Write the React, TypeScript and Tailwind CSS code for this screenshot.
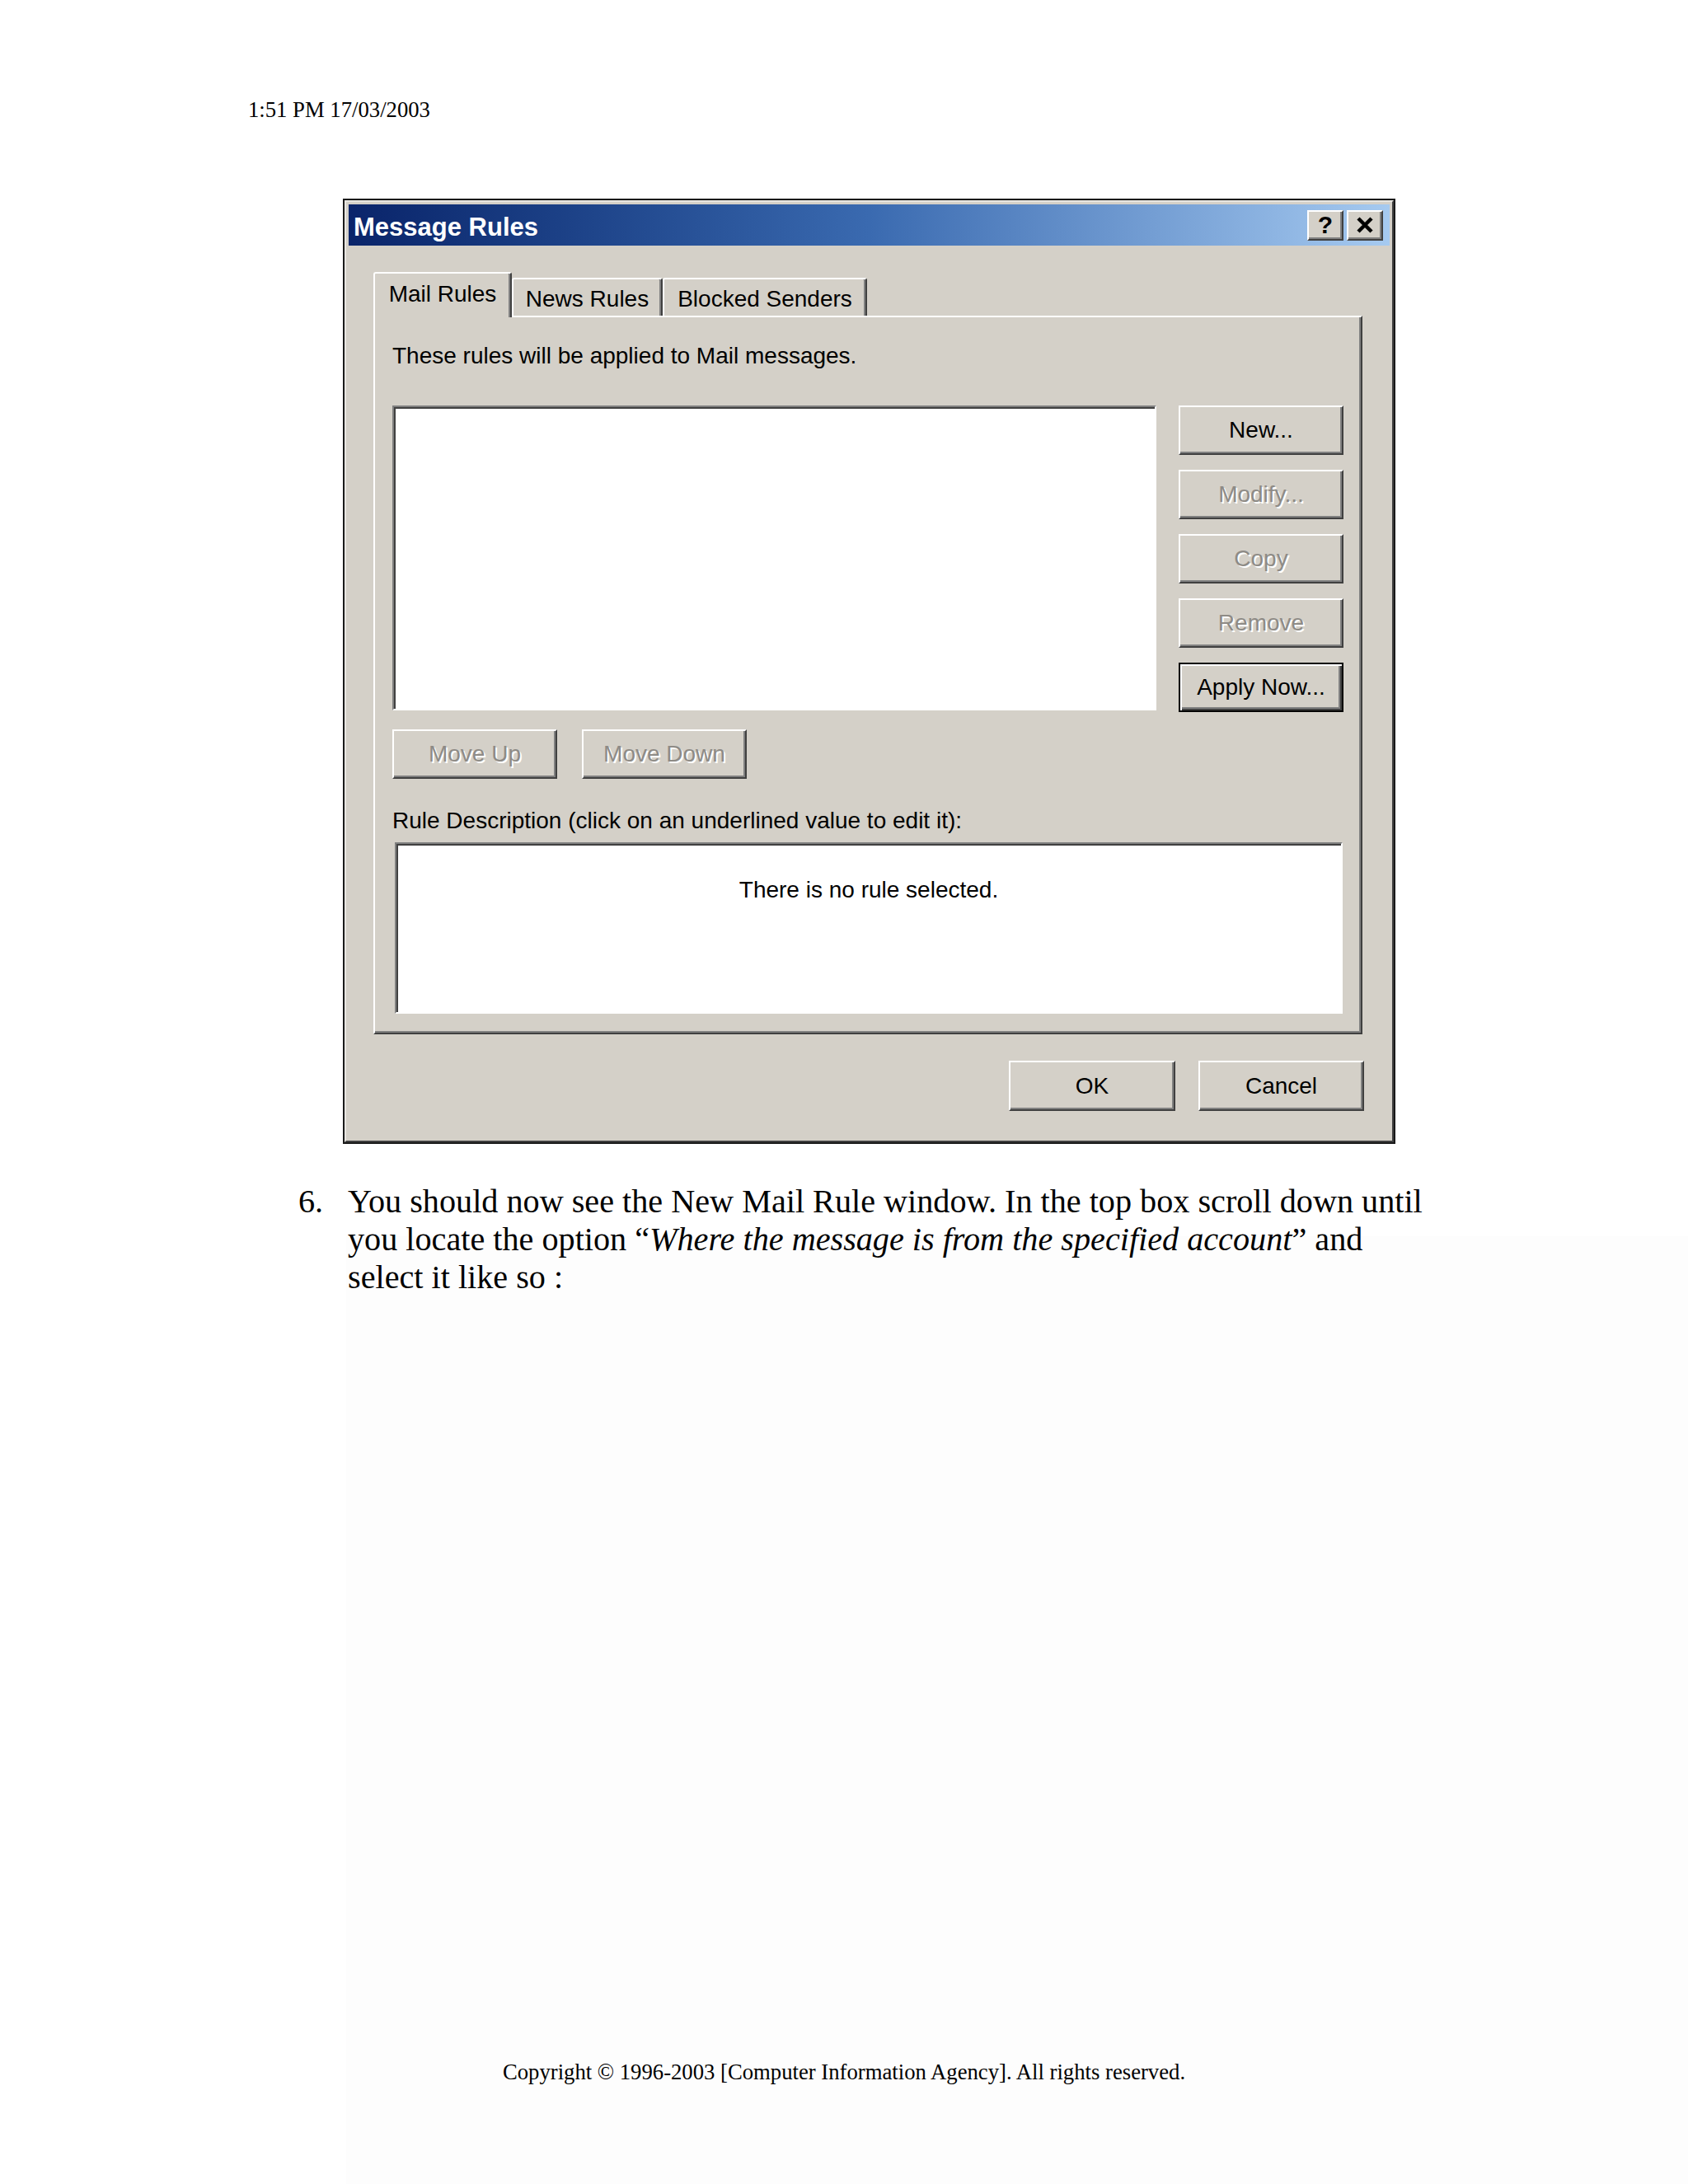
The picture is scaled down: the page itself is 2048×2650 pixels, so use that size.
import { ReactNode } from 'react';

const ui = "font-['Liberation_Sans',Arial,sans-serif] text-[28px] leading-[32px] text-black";
const doc = "font-['Liberation_Serif','Times_New_Roman',serif] text-black";

const raised =
  'bg-[#d4d0c8] border-2 border-t-white border-l-white border-r-[#404040] border-b-[#404040] shadow-[inset_-2px_-2px_0_#808080]';
const sunken =
  'bg-white border-2 border-t-[#808080] border-l-[#808080] border-r-white border-b-white shadow-[inset_2px_2px_0_#404040]';

interface BtnProps {
  label: string;
  disabled?: boolean;
  isDefault?: boolean;
  className?: string;
}

const Btn = ({ label, disabled, isDefault, className = '' }: BtnProps) => (
  <div
    className={`flex items-center justify-center h-[60px] w-[200px] ${
      isDefault
        ? 'bg-[#d4d0c8] border-2 border-black shadow-[inset_2px_2px_0_#ffffff,inset_-2px_-2px_0_#404040,inset_-4px_-4px_0_#808080]'
        : raised
    } ${className}`}
  >
    <span
      className={
        disabled ? 'text-[#8e8b86] [text-shadow:2px_2px_0_#ffffff]' : 'text-black'
      }
    >
      {label}
    </span>
  </div>
);

const Tab = ({ children, active, width }: { children: ReactNode; active?: boolean; width: string }) => (
  <div
    className={`flex justify-center rounded-t-[3px] border-t-2 border-l-2 border-r-2 border-t-white border-l-white border-r-[#404040] shadow-[inset_-2px_0_0_#808080] bg-[#d4d0c8] ${width} ${
      active ? 'h-[55px] pt-[9px] -mb-[2px] relative z-10' : 'h-[46px] pt-[8px]'
    }`}
  >
    {children}
  </div>
);

const TitleButton = ({ children }: { children: ReactNode }) => (
  <div className={`flex items-center justify-center w-[44px] h-[37px] ${raised}`}>{children}</div>
);

const MessageRules = () => (
  <div className="ml-[416px] w-[1277px] h-[1147px] border-2 border-[#1a1a1a]">
    <div className="h-full flex flex-col bg-[#d4d0c8] border-2 border-t-[#e8e6e1] border-l-[#e8e6e1] border-r-[#404040] border-b-[#404040] p-[3px]">
      {/* title bar */}
      <div className="h-[50px] flex items-center bg-gradient-to-r from-[#0a246a] via-[#3a6ab0] to-[#a6caf0] pl-[6px] pr-[8px]">
        <span className="pt-[6px] font-['Liberation_Sans',Arial,sans-serif] font-bold text-[31px] leading-[34px] text-white">
          Message Rules
        </span>
        <div className="flex-1" />
        <div className="flex gap-[4px]">
          <TitleButton>
            <span className="font-['Liberation_Sans',Arial,sans-serif] font-bold text-[30px] leading-none text-black">?</span>
          </TitleButton>
          <TitleButton>
            <svg width="22" height="20" viewBox="0 0 22 20">
              <path d="M3 2 L19 18 M19 2 L3 18" stroke="#000" strokeWidth="4.5" />
            </svg>
          </TitleButton>
        </div>
      </div>

      <div className={`flex-1 flex flex-col pl-[30px] pr-[33px] ${ui}`}>
        {/* tabs */}
        <div className="mt-[32px] h-[53px] flex items-end">
          <Tab active width="w-[168px]">Mail Rules</Tab>
          <Tab width="w-[183px]">News Rules</Tab>
          <Tab width="w-[248px]">Blocked Senders</Tab>
        </div>

        {/* panel */}
        <div className={`h-[872px] flex flex-col pl-[21px] pr-[19px] pt-[31px] ${raised}`}>
          <p>These rules will be applied to Mail messages.</p>

          <div className="mt-[44px] flex gap-[27px]">
            <div className={`w-[927px] h-[370px] ${sunken}`} />
            <div className="flex flex-col gap-[18px]">
              <Btn label="New..." />
              <Btn label="Modify..." disabled />
              <Btn label="Copy" disabled />
              <Btn label="Remove" disabled />
              <Btn label="Apply Now..." isDefault />
            </div>
          </div>

          <div className="mt-[21px] flex gap-[30px]">
            <Btn label="Move Up" disabled />
            <Btn label="Move Down" disabled />
          </div>

          <p className="mt-[35px]">Rule Description (click on an underlined value to edit it):</p>

          <div className={`mt-[10px] ml-[3px] w-[1150px] h-[208px] pt-[40px] text-center ${sunken}`}>
            There is no rule selected.
          </div>
        </div>

        {/* dialog buttons */}
        <div className="mt-[32px] flex justify-end gap-[28px] -mr-[2px]">
          <Btn label="OK" className="w-[202px] h-[61px]" />
          <Btn label="Cancel" className="w-[201px] h-[61px]" />
        </div>
      </div>
    </div>
  </div>
);

export default function App() {
  return (
    <div className="relative w-[2048px] h-[2650px] bg-white overflow-hidden">
      {/* faint backdrop of the next (blank) screenshot */}
      <div className="absolute left-[420px] top-[1500px] right-0 bottom-0 bg-[#fdfdfd]" />

      <div className="relative">
        <div className="h-[241px] pt-[120px] pl-[301px]">
          <p className={`${doc} text-[26.7px] leading-none`}>1:51 PM 17/03/2003</p>
        </div>

        <MessageRules />

        <div className={`mt-[47px] ml-[362px] flex ${doc} text-[40.2px] leading-[46px]`}>
          <span className="w-[60px] shrink-0">6.</span>
          <p className="w-[1330px]">
            You should now see the New Mail Rule window. In the top box scroll down until you locate the option “
            <i>Where the message is from the specified account</i>” and select it like so :
          </p>
        </div>

        <p className={`mt-[928px] text-center ${doc} text-[26.7px] leading-none`}>
          Copyright © 1996-2003 [Computer Information Agency]. All rights reserved.
        </p>
      </div>
    </div>
  );
}
